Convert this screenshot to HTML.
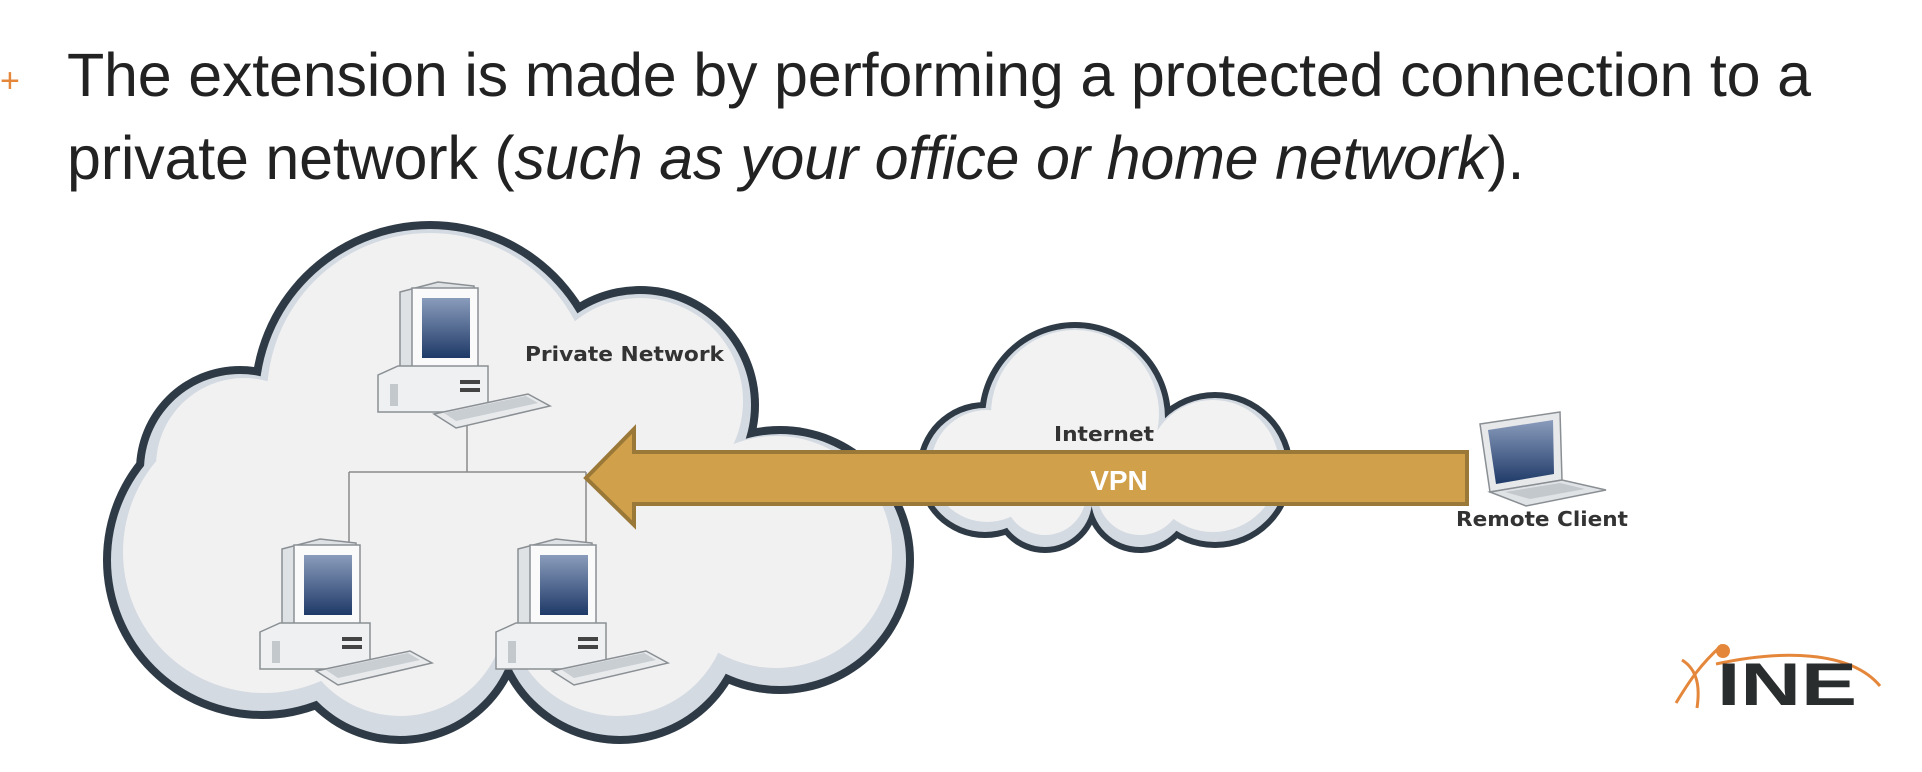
<!DOCTYPE html>
<html><head><meta charset="utf-8"><style>
html,body{margin:0;padding:0;background:#fff;width:1922px;height:772px;overflow:hidden}
.t{position:absolute;left:67px;font-family:"Liberation Sans",Arial,sans-serif;font-size:61px;color:#222;white-space:nowrap;letter-spacing:-0.2px}
</style></head><body>
<div style="position:absolute;left:0;top:62px;font-family:'Liberation Sans',sans-serif;font-size:34px;color:#e5873a">+</div>
<div class="t" style="top:40px">The extension is made by performing a protected connection to a</div>
<div class="t" style="top:123px">private network (<i>such as your office or home network</i>).</div>
<svg width="1922" height="772" viewBox="0 0 1922 772" style="position:absolute;left:0;top:0">
<defs>
<linearGradient id="sc" x1="0" y1="0" x2="0" y2="1"><stop offset="0" stop-color="#8a9cbc"/><stop offset="1" stop-color="#1f3a68"/></linearGradient>
<g id="pc">
<polygon points="22,12 60,2 96,6 96,86 22,90" fill="#dfe2e4" stroke="#8a8f94" stroke-width="1.5"/>
<rect x="34" y="8" width="66" height="80" fill="#fafafa" stroke="#8a8f94" stroke-width="1.5"/>
<rect x="44" y="18" width="48" height="60" fill="url(#sc)"/>
<polygon points="0,95 20,86 110,86 110,132 0,132" fill="#eef0f1" stroke="#8a8f94" stroke-width="1.5"/>
<rect x="12" y="104" width="8" height="22" fill="#c3c8cc"/>
<rect x="82" y="100" width="20" height="4" fill="#444"/><rect x="82" y="108" width="20" height="4" fill="#444"/>
<polygon points="56,134 150,114 172,126 78,148" fill="#e8eaec" stroke="#8a8f94" stroke-width="1.5"/>
<polygon points="66,133 148,116 160,123 78,141" fill="#c9ced3"/>
</g>
</defs>
<!-- big cloud -->
<g fill="#2e3a46">
<circle cx="430" cy="400" r="179"/><circle cx="640" cy="405" r="119"/><circle cx="780" cy="560" r="134"/>
<circle cx="262" cy="560" r="159"/><circle cx="400" cy="620" r="124"/><circle cx="620" cy="615" r="129"/><circle cx="240" cy="470" r="104"/>
</g>
<g fill="#d4dae2">
<circle cx="430" cy="400" r="171"/><circle cx="640" cy="405" r="111"/><circle cx="780" cy="560" r="126"/>
<circle cx="262" cy="560" r="151"/><circle cx="400" cy="620" r="116"/><circle cx="620" cy="615" r="121"/><circle cx="240" cy="470" r="96"/>
</g>
<g fill="#f1f1f1">
<circle cx="430" cy="396" r="163"/><circle cx="640" cy="401" r="103"/><circle cx="776" cy="552" r="116"/>
<circle cx="264" cy="552" r="141"/><circle cx="400" cy="610" r="106"/><circle cx="618" cy="605" r="111"/><circle cx="244" cy="466" r="88"/>
<circle cx="540" cy="500" r="160"/>
</g>
<!-- internet cloud -->
<g fill="#2e3a46">
<circle cx="1075" cy="418" r="96"/><circle cx="985" cy="470" r="68"/><circle cx="1215" cy="470" r="78"/>
<circle cx="1045" cy="500" r="53"/><circle cx="1140" cy="498" r="55"/>
</g>
<g fill="#d4dae2">
<circle cx="1075" cy="418" r="90"/><circle cx="985" cy="470" r="62"/><circle cx="1215" cy="470" r="72"/>
<circle cx="1045" cy="500" r="47"/><circle cx="1140" cy="498" r="49"/>
</g>
<g fill="#f2f2f2">
<circle cx="1075" cy="414" r="84"/><circle cx="987" cy="466" r="56"/><circle cx="1213" cy="466" r="66"/>
<circle cx="1045" cy="494" r="41"/><circle cx="1140" cy="492" r="43"/>
</g>
<!-- lines -->
<g stroke="#8a8a8a" stroke-width="1.5" fill="none">
<path d="M467 423V472M349 472H586M349 472V545M586 472V545"/>
</g>
<use href="#pc" x="378" y="280"/>
<use href="#pc" x="260" y="537"/>
<use href="#pc" x="496" y="537"/>
<!-- laptop -->
<polygon points="1480,424 1560,412 1562,480 1490,492" fill="#e6e8ea" stroke="#8a8f94" stroke-width="1.5"/>
<polygon points="1488,430 1553,420 1554,474 1496,484" fill="url(#sc)"/>
<polygon points="1490,492 1562,480 1606,490 1526,506" fill="#e0e3e6" stroke="#8a8f94" stroke-width="1.5"/>
<polygon points="1505,492 1560,483 1585,489 1530,499" fill="#c3c8cc"/>
<!-- arrow -->
<polygon points="586,478 634,429 634,452 1467,452 1467,504 634,504 634,525" fill="#d1a04a" stroke="#9a7838" stroke-width="4"/>
<text x="1119" y="490" font-family="'Liberation Sans',sans-serif" font-weight="bold" font-size="28" fill="#fff" text-anchor="middle">VPN</text>
<g font-family="'DejaVu Sans Condensed','DejaVu Sans',sans-serif" font-weight="bold" font-size="20" fill="#333">
<text x="525" y="361" textLength="199" lengthAdjust="spacingAndGlyphs">Private Network</text>
<text x="1054" y="441" textLength="100" lengthAdjust="spacingAndGlyphs">Internet</text>
<text x="1456" y="526" textLength="172" lengthAdjust="spacingAndGlyphs">Remote Client</text>
</g>
<!-- INE logo -->
<g fill="none" stroke="#e5873a" stroke-width="3">
<path d="M1676 703C1690 680 1700 665 1722 645"/>
<path d="M1682 660C1698 670 1700 688 1697 708"/>
<path d="M1716 664C1780 650 1850 650 1880 686"/>
</g>
<circle cx="1723" cy="651" r="7" fill="#e5873a"/>
<text x="1717" y="705" font-family="'Liberation Sans',sans-serif" font-weight="bold" font-size="60" fill="#2a2d2d" textLength="140" lengthAdjust="spacingAndGlyphs">INE</text>
</svg>
</body></html>
